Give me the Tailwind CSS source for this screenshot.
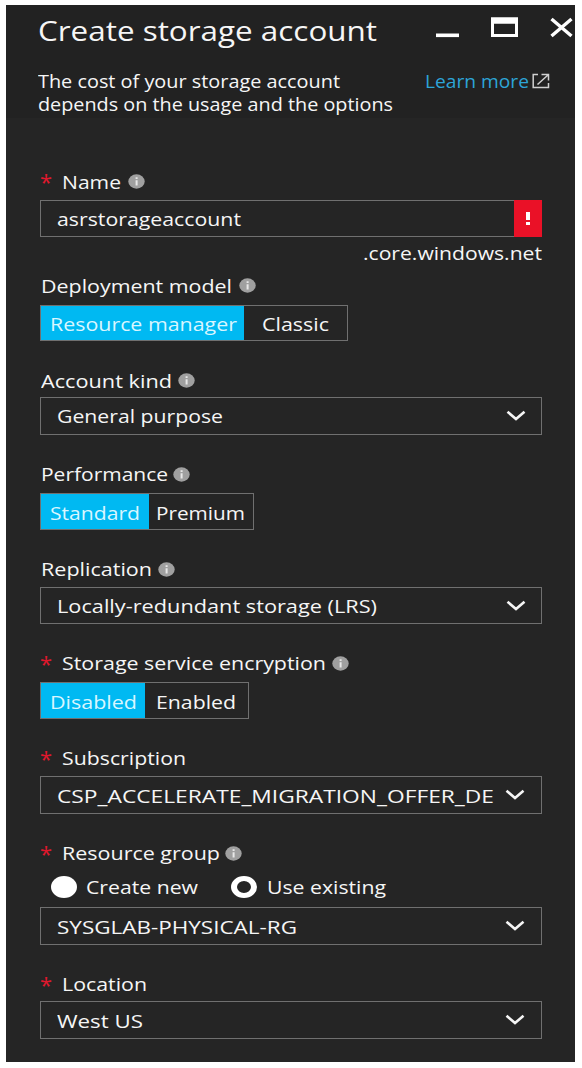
<!DOCTYPE html>
<html lang="en">
<head>
<meta charset="utf-8">
<title>Create storage account</title>
<script src="https://cdn.jsdelivr.net/npm/@tailwindcss/browser@4"></script>
</head>
<body class="h-[1068px] overflow-hidden bg-white px-[6px] pt-[5px] font-['Open_Sans','Noto_Sans',sans-serif] text-[18.5px] text-[#f6f6f6]">
<svg class="hidden">
  <symbol id="info" viewBox="0 0 17 15"><ellipse cx="8.5" cy="7.5" rx="8.2" ry="7.2" fill="#a0a0a0"/><path d="M7.6 3.2h2v1.8h-2zM7.6 6.2h2v5.2h-2z" fill="#e8e8e8"/></symbol>
  <symbol id="chev" viewBox="0 0 20 12"><path d="M1.5 1.8 10 9l8.500-7.200" fill="none" stroke="#f5f5f5" stroke-width="2.6"/></symbol>
</svg>
<main class="h-[1057px] w-[569px] bg-[#252525]">
  <header class="h-[113px] bg-[#222222] pl-[32px]">
    <div class="flex h-[49px] items-center">
      <h1 class="w-[396px] text-[28px] leading-[48px]"><span data-w="339">Create storage account</span></h1>
      <svg class="h-[49px] w-[140px]" viewBox="434 5 140 49" fill="none" stroke="#fff"><path d="M436 35.300h23" stroke-width="3.600"/><path d="M492.500 19.500h24v16h-24z" stroke-width="3"/><path d="M491 20.500h27" stroke-width="6.500"/><path d="m551.500 19 20 17m0-17-20 17" stroke-width="3.400"/></svg>
    </div>
    <div class="flex pt-[15px] leading-[23px]">
      <p class="w-[387px]"><span data-w="302">The cost of your storage account</span><br><span data-w="355">depends on the usage and the options</span></p>
      <a class="flex h-[23px] text-[#2da5d8]"><span class="w-[107px]"><span data-w="104">Learn more</span></span>
        <svg class="mt-[4px] h-[16px] w-[18px]" viewBox="0 0 18 16" fill="none" stroke="#d0d0d0" stroke-width="1.500"><path d="M6 1.500H1.200V14.500H16.500V10M9.500 1.500h7v6M16 2 5.500 11.500"/></svg></a>
    </div>
  </header>
  <form class="w-[536px] pt-[49px] pl-[34px]">
    <div class="flex h-[33px] items-center pb-[4px] leading-[24px]"><span class="w-[22px] pb-[1px] text-[22px] font-medium text-[#e0182d]">*</span><span class="w-[66px]"><span data-w="59">Name</span></span><svg class="h-[15px] w-[17px]"><use href="#info"/></svg></div>
    <div class="flex h-[37px] w-[502px] border border-[#707070] leading-[35px]"><span class="flex-1 pl-[16px]"><span data-w="184">asrstorageaccount</span></span><span class="-my-px -mr-px flex w-[28px] items-center justify-center bg-[#ea1127]"><svg class="h-[15px] w-[6px]" viewBox="0 0 6 15"><path d="M1 1h4v8H1zM1 11h4v3H1z" fill="#fff"/></svg></span></div>
    <div class="h-[32px] pl-[323px] leading-[31px]"><span data-w="179">.core.windows.net</span></div>
    <div class="flex h-[36px] items-center pb-[3px] leading-[24px]"><span class="w-[199px] pl-px"><span data-w="191">Deployment model</span></span><svg class="h-[15px] w-[17px]"><use href="#info"/></svg></div>
    <div class="flex h-[36px] w-[308px] border border-[#707070] leading-[35px]"><span class="w-[203px] bg-[#00b9f2] pl-[9px] text-[#d9f6ff]"><span data-w="187">Resource manager</span></span><span class="pl-[18px]"><span data-w="67">Classic</span></span></div>

    <div class="flex h-[56px] items-center pt-[23px] leading-[24px]"><span class="w-[138px] pl-px"><span data-w="131">Account kind</span></span><svg class="h-[15px] w-[17px]"><use href="#info"/></svg></div>
    <div class="flex h-[38px] w-[502px] items-center border border-[#707070] leading-[36px]"><span class="flex-1 pl-[16px]"><span data-w="166">General purpose</span></span><svg class="mr-[15px] h-[12px] w-[20px]"><use href="#chev"/></svg></div>

    <div class="flex h-[58px] items-center pt-[20px] leading-[24px]"><span class="w-[133px] pl-px"><span data-w="127">Performance</span></span><svg class="h-[15px] w-[17px]"><use href="#info"/></svg></div>
    <div class="flex h-[37px] w-[214px] border border-[#707070] leading-[37px]"><span class="w-[108px] bg-[#00b9f2] pl-[9px] text-[#d9f6ff]"><span data-w="90">Standard</span></span><span class="pl-[7px]"><span data-w="89">Premium</span></span></div>

    <div class="flex h-[57px] items-center pt-[21px] leading-[24px]"><span class="w-[118px] pl-px"><span data-w="111">Replication</span></span><svg class="h-[15px] w-[17px]"><use href="#info"/></svg></div>
    <div class="flex h-[37px] w-[502px] items-center border border-[#707070] leading-[35px]"><span class="flex-1 pl-[16px]"><span data-w="320">Locally-redundant storage (LRS)</span></span><svg class="mr-[15px] h-[12px] w-[20px]"><use href="#chev"/></svg></div>

    <div class="flex h-[58px] items-center pt-[20px] leading-[24px]"><span class="w-[22px] pb-[1px] text-[22px] font-medium text-[#e0182d]">*</span><span class="w-[270px]"><span data-w="264">Storage service encryption</span></span><svg class="h-[15px] w-[17px]"><use href="#info"/></svg></div>
    <div class="flex h-[37px] w-[209px] border border-[#707070] leading-[37px]"><span class="w-[104px] bg-[#00b9f2] pl-[9px] text-[#d9f6ff]"><span data-w="87">Disabled</span></span><span class="pl-[11px]"><span data-w="80">Enabled</span></span></div>

    <div class="flex h-[57px] items-center pt-[21px] leading-[24px]"><span class="w-[22px] pb-[1px] text-[22px] font-medium text-[#e0182d]">*</span><span data-w="124">Subscription</span></div>
    <div class="flex h-[38px] w-[502px] items-center border border-[#707070] leading-[36px]"><span class="flex-1 pt-px pl-[16px]"><span data-w="437">CSP_ACCELERATE_MIGRATION_OFFER_DE</span></span><svg class="mr-[16px] h-[12px] w-[20px]"><use href="#chev"/></svg></div>

    <div class="flex h-[56px] items-center pt-[22px] leading-[24px]"><span class="w-[22px] pb-[1px] text-[22px] font-medium text-[#e0182d]">*</span><span class="w-[163px]"><span data-w="158">Resource group</span></span><svg class="h-[15px] w-[17px]"><use href="#info"/></svg></div>
    <div class="flex h-[37px] items-center pb-[4px] pl-[11px] leading-[24px]"><span class="mr-[9px] h-[22px] w-[26px] rounded-[50%] bg-white"></span><span class="w-[145px]"><span data-w="112">Create new</span></span><span class="mr-[10px] h-[22px] w-[26px] rounded-[50%] border-x-6 border-y-5 border-white"></span><span data-w="119">Use existing</span></div>
    <div class="flex h-[38px] w-[502px] items-center border border-[#707070] leading-[36px]"><span class="flex-1 pt-[2px] pl-[16px]"><span data-w="240">SYSGLAB-PHYSICAL-RG</span></span><svg class="mr-[16px] h-[12px] w-[20px]"><use href="#chev"/></svg></div>

    <div class="flex h-[56px] items-center pt-[22px] leading-[24px]"><span class="w-[22px] pb-[1px] text-[22px] font-medium text-[#e0182d]">*</span><span data-w="85">Location</span></div>
    <div class="flex h-[38px] w-[502px] items-center border border-[#707070] leading-[36px]"><span class="flex-1 pt-px pl-[16px]"><span data-w="86">West US</span></span><svg class="mr-[16px] h-[12px] w-[20px]"><use href="#chev"/></svg></div>
  </form>
</main>
<script>
// Stretch each label horizontally to its design width, once styles are in force.
function fitLabels() {
  document.querySelectorAll('[data-w]').forEach(el => {
    el.style.cssText = 'display:inline-block;white-space:nowrap;transform-origin:0 50%;vertical-align:top;flex:none';
    const natural = el.getBoundingClientRect().width;
    el.style.transform = `scaleX(${el.dataset.w / natural})`;
    el.style.marginRight = (el.dataset.w - natural) + 'px';
  });
}
fitLabels();
window.addEventListener('load', () => { fitLabels(); requestAnimationFrame(fitLabels); });
new ResizeObserver(fitLabels).observe(document.querySelector('h1'));
</script>
</body>
</html>
